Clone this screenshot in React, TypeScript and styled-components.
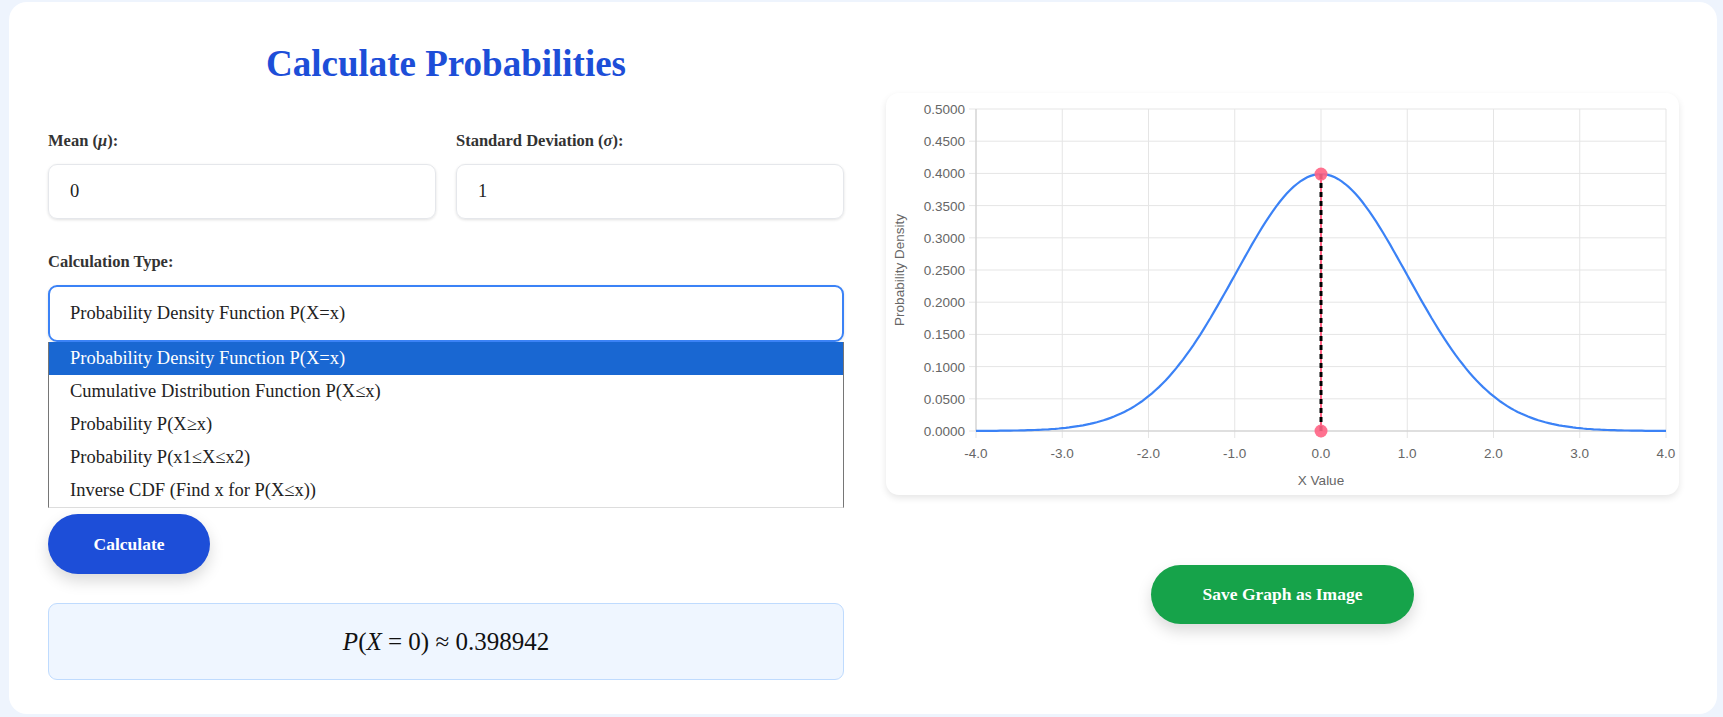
import React from "react";
import styled, { createGlobalStyle } from "styled-components";

const Global = createGlobalStyle`
  body { margin: 0; background: #eef4fd; font-family: "Liberation Serif", "Times New Roman", serif; }
`;
const Page = styled.div`padding: 2px 6px 0 9px;`;
const Card = styled.div`
  background: #fff; border-radius: 18px; padding: 40px 38px 0 39px; box-sizing: border-box;
  display: grid; grid-template-columns: 796px 793px; column-gap: 42px; height: 712px;
`;
const Left = styled.div`display: flex; flex-direction: column;`;
const Title = styled.h1`
  margin: 0; text-align: center; color: #1d4ed8; font-size: 37px; font-weight: bold; line-height: 44px;
`;
const Row = styled.div`display: grid; grid-template-columns: 1fr 1fr; gap: 20px; margin-top: 45px;`;
const Field = styled.div<{ $top?: number }>`display: flex; flex-direction: column; margin-top: ${p => p.$top ?? 0}px;`;
const Label = styled.label`font-size: 16.5px; font-weight: bold; color: #333; margin-bottom: 14px; line-height: 19px;`;
const Input = styled.div`
  height: 55px; box-sizing: border-box; border: 1px solid #e5e7eb; border-radius: 9px;
  box-shadow: 0 1px 3px rgba(0,0,0,0.12); padding: 0 21px; display: flex; align-items: center;
  font-size: 18.5px; color: #222;
`;
const SelectWrap = styled.div`position: relative; margin-bottom: 172px;`;
const Select = styled(Input)`
  height: 57px; border: 2px solid #3b82f6; padding: 0 20px;
`;
const List = styled.div`
  position: absolute; left: 0; right: 0; top: 57px; background: #fff;
  border: 1px solid #767676; border-top: none; border-bottom: 1px solid #ddd;
`;
const Option = styled.div<{ $sel?: boolean }>`
  height: 33px; line-height: 33px; padding-left: 21px; font-size: 18.5px;
  background: ${p => (p.$sel ? "#1967d2" : "#fff")}; color: ${p => (p.$sel ? "#fff" : "#222")};
`;
const Pill = styled.button<{ $green?: boolean }>`
  border: none; border-radius: 30px; height: ${p => (p.$green ? 59 : 60)}px;
  width: ${p => (p.$green ? 263 : 162)}px;
  background: ${p => (p.$green ? "#16a34a" : "#1d4ed8")}; color: #fff; font-family: inherit;
  font-size: 17.5px; font-weight: bold; box-shadow: 0 7px 15px rgba(0,0,0,0.15);
  align-self: ${p => (p.$green ? "center" : "flex-start")};
`;
const Result = styled.div`
  margin-top: 29px; height: 77px; box-sizing: border-box; background: #eff6ff; border: 1px solid #bfdbfe;
  border-radius: 9px; display: flex; align-items: center; justify-content: center; font-size: 25px; color: #111;
`;
const Right = styled.div`display: flex; flex-direction: column; padding-top: 51px;`;
const ChartCard = styled.div`
  background: #fff; border-radius: 13px; box-shadow: 0 3px 7px rgba(0,0,0,0.1); height: 402px; margin-bottom: 70px;
`;

const W = 793, H = 402, X0 = 90, X1 = 780, Y0 = 16, Y1 = 338;
const sx = (x: number) => X0 + ((x + 4) / 8) * (X1 - X0);
const sy = (y: number) => Y1 - (y / 0.5) * (Y1 - Y0);

function Chart() {
  const pts: string[] = [];
  for (let i = 0; i <= 200; i++) {
    const x = -4 + (8 * i) / 200;
    const y = Math.exp(-x * x / 2) / Math.sqrt(2 * Math.PI);
    pts.push(`${sx(x).toFixed(1)},${sy(y).toFixed(1)}`);
  }
  const yt = Array.from({ length: 11 }, (_, i) => i * 0.05);
  const xt = Array.from({ length: 9 }, (_, i) => i - 4);
  const f = { fontFamily: "Liberation Sans, Arial, sans-serif", fontSize: 13.5, fill: "#666" };
  return (
    <svg width={W} height={H}>
      {yt.map(v => <line key={v} x1={X0 - 7} x2={X1} y1={sy(v)} y2={sy(v)} stroke="#e5e5e5" />)}
      {xt.map(v => <line key={v} x1={sx(v)} x2={sx(v)} y1={Y0} y2={Y1 + 7} stroke="#e5e5e5" />)}
      <line x1={X0} x2={X1} y1={Y1} y2={Y1} stroke="#ccc" />
      <line x1={X0} x2={X0} y1={Y0} y2={Y1} stroke="#ccc" />
      {yt.map(v => <text key={v} x={X0 - 11} y={sy(v) + 5} textAnchor="end" {...f}>{v.toFixed(4)}</text>)}
      {xt.map(v => <text key={v} x={sx(v)} y={Y1 + 27} textAnchor="middle" {...f}>{v.toFixed(1)}</text>)}
      <text x={sx(0)} y={392} textAnchor="middle" {...f}>X Value</text>
      <text transform={`translate(18,${(Y0 + Y1) / 2}) rotate(-90)`} textAnchor="middle" {...f}>Probability Density</text>
      <polyline points={pts.join(" ")} fill="none" stroke="#3b82f6" strokeWidth={2.2} />
      <line x1={sx(0)} x2={sx(0)} y1={sy(0.3989)} y2={sy(0)} stroke="#ff6384" strokeWidth={2} />
      <line x1={sx(0)} x2={sx(0)} y1={sy(0.3989)} y2={sy(0)} stroke="#000" strokeWidth={3} strokeDasharray="5 4" />
      <circle cx={sx(0)} cy={sy(0.3989)} r={6.5} fill="#ff6384" opacity={0.9} />
      <circle cx={sx(0)} cy={sy(0)} r={6.5} fill="#ff6384" opacity={0.9} />
    </svg>
  );
}

export default function App() {
  const opts = [
    "Probability Density Function P(X=x)",
    "Cumulative Distribution Function P(X≤x)",
    "Probability P(X≥x)",
    "Probability P(x1≤X≤x2)",
    "Inverse CDF (Find x for P(X≤x))",
  ];
  return (
    <Page>
      <Global />
      <Card>
        <Left>
          <Title>Calculate Probabilities</Title>
          <Row>
            <Field><Label>Mean (<i>μ</i>):</Label><Input>0</Input></Field>
            <Field><Label>Standard Deviation (<i>σ</i>):</Label><Input>1</Input></Field>
          </Row>
          <Field $top={33}>
            <Label>Calculation Type:</Label>
            <SelectWrap>
              <Select>{opts[0]}</Select>
              <List>{opts.map((o, i) => <Option key={o} $sel={i === 0}>{o}</Option>)}</List>
            </SelectWrap>
          </Field>
          <Pill>Calculate</Pill>
          <Result><span><i>P</i>(<i>X</i> = 0) ≈ 0.398942</span></Result>
        </Left>
        <Right>
          <ChartCard><Chart /></ChartCard>
          <Pill $green>Save Graph as Image</Pill>
        </Right>
      </Card>
    </Page>
  );
}
